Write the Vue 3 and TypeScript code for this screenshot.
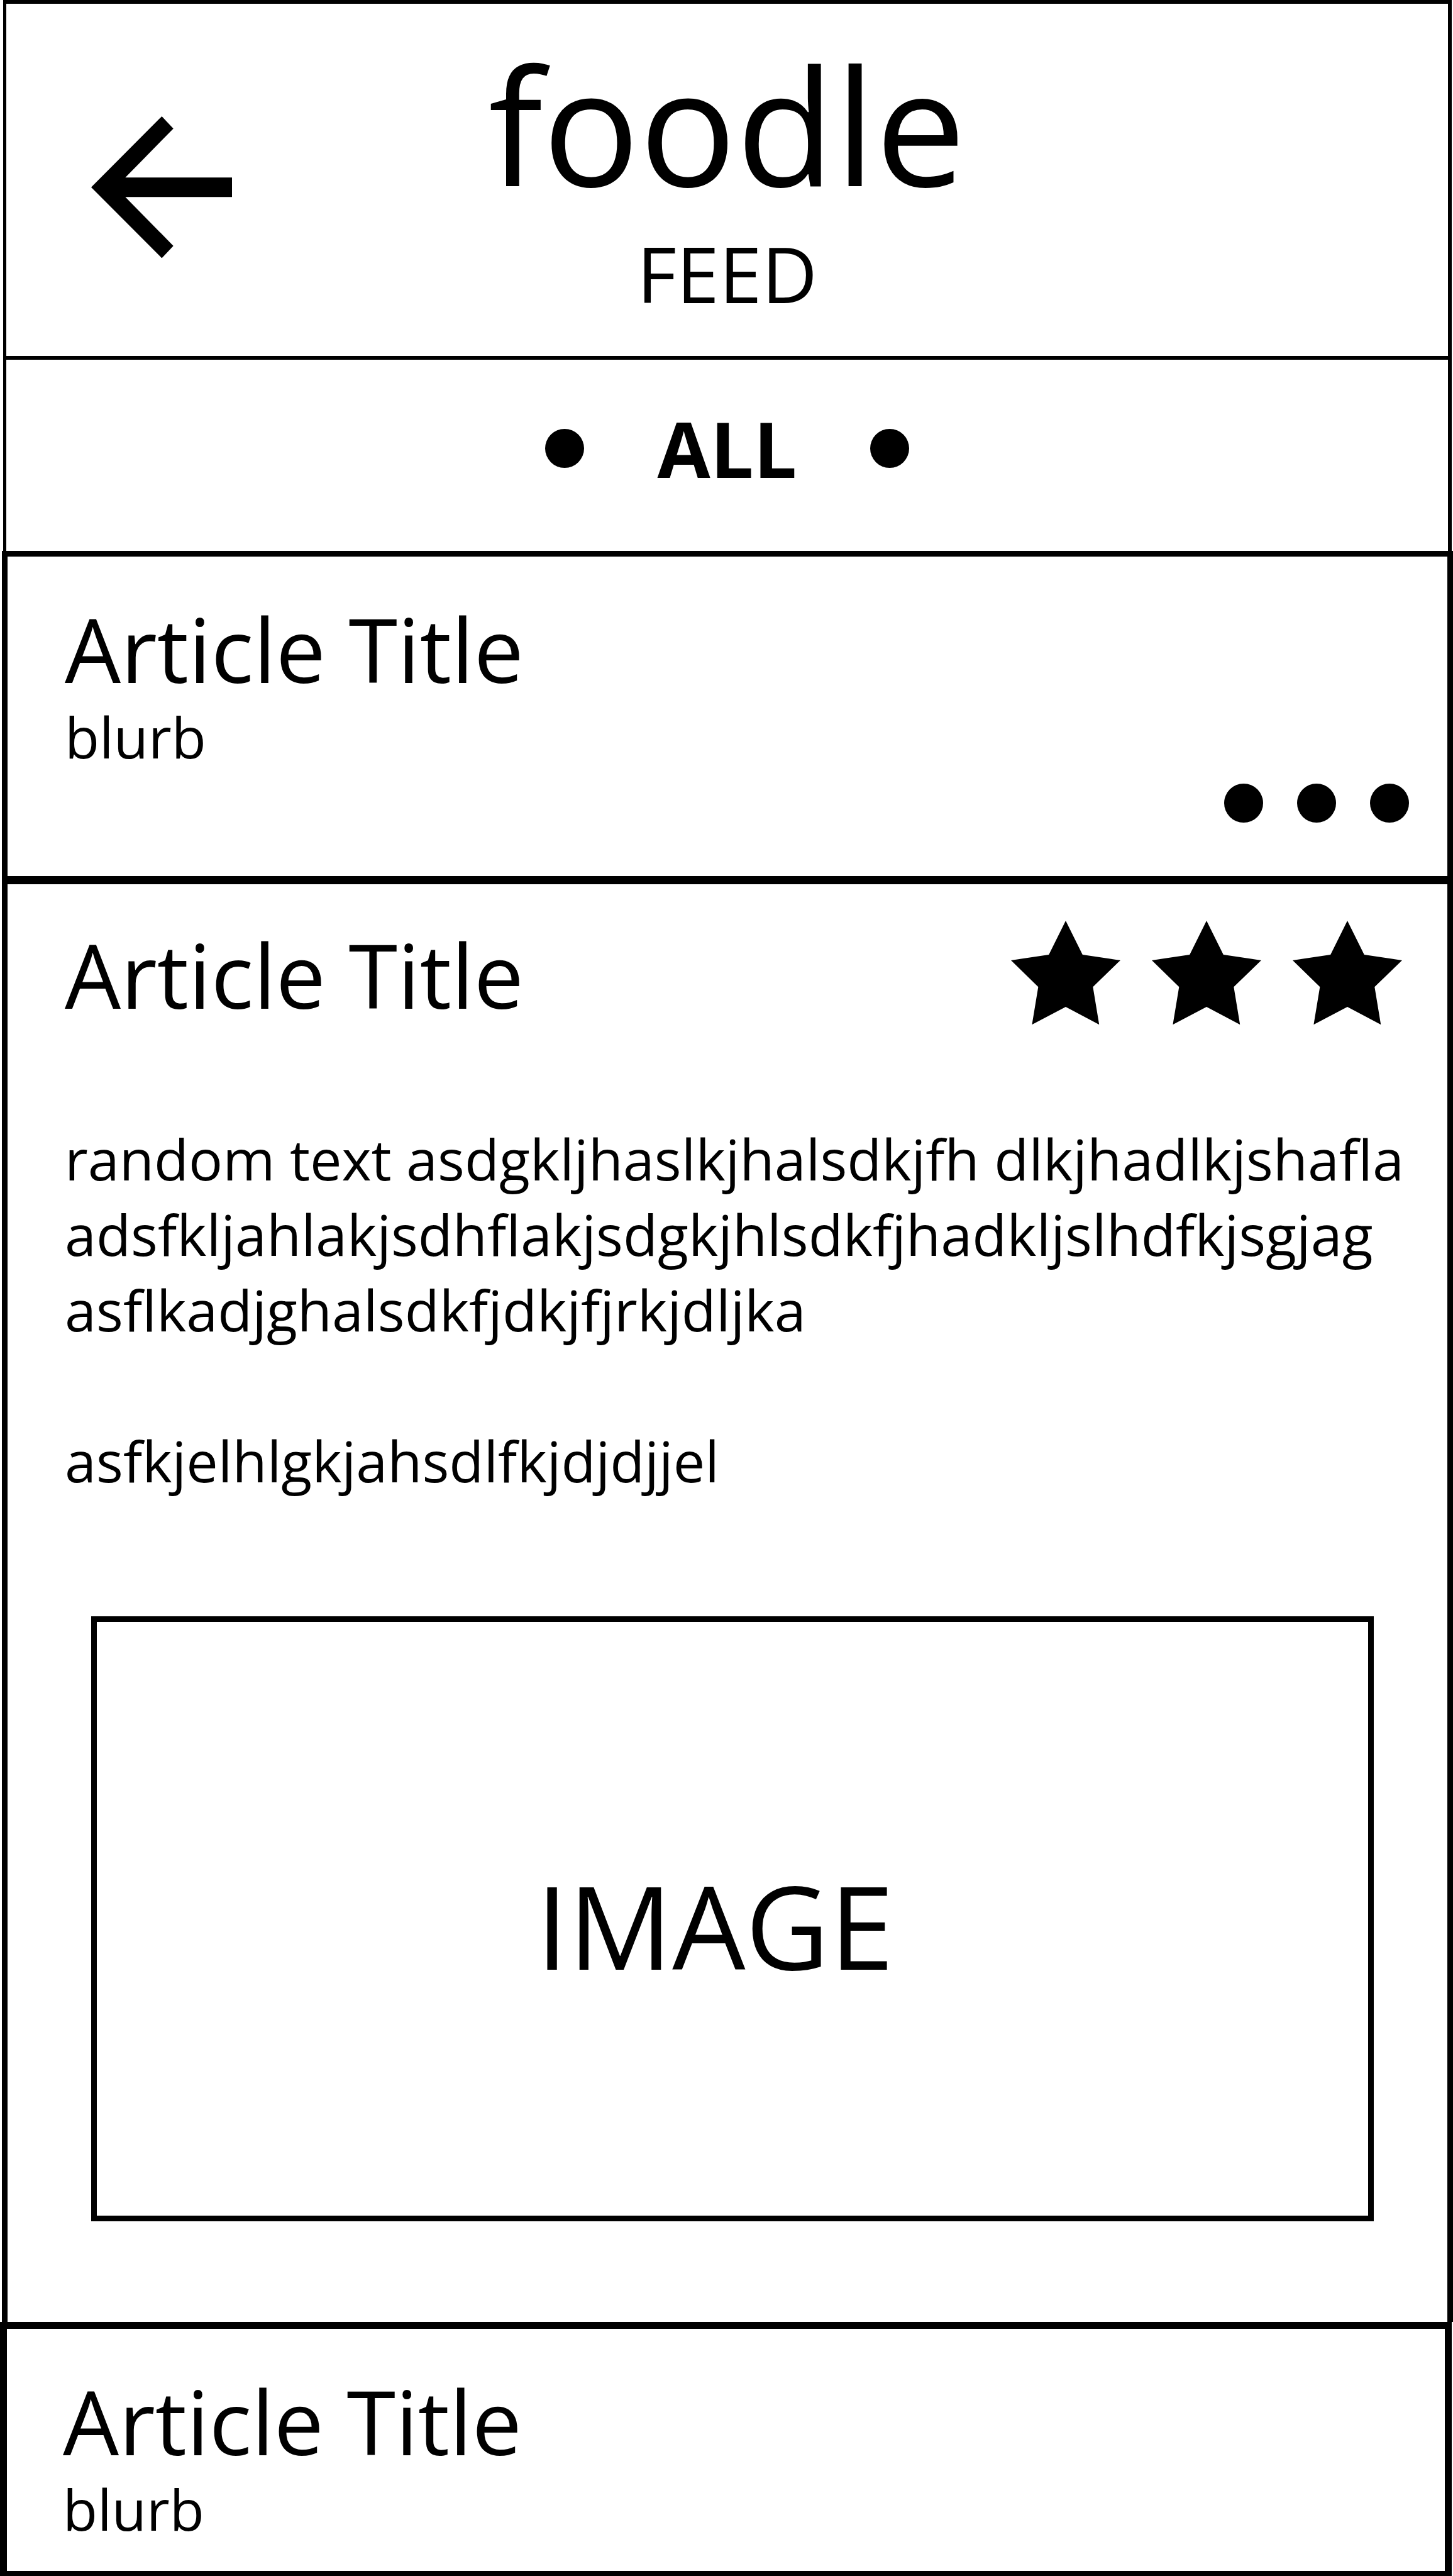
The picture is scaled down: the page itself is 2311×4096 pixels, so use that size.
<script setup lang="ts">
interface Story {
  title: string
  blurb: string
}

const first: Story = { title: 'Article Title', blurb: 'blurb' }
const last: Story = { title: 'Article Title', blurb: 'blurb' }

const paragraphs: string[] = [
  'random text asdgkljhaslkjhalsdkjfh dlkjhadlkjshafla adsfkljahlakjsdhflakjsdgkjhlsdkfjhadkljslhdfkjsgjag asflkadjghalsdkfjdkjfjrkjdljka',
  'asfkjelhlgkjahsdlfkjdjdjjel',
]

const rating = 3
</script>

<template>
  <div class="feed">
    <header class="top">
      <button class="back" type="button" aria-label="Back">
        <svg viewBox="0 0 305 307" aria-hidden="true">
          <path d="M0 153.500 153 0 178 26.500 74 132.500H305V174.500H74L178 280.500 153 307Z" />
        </svg>
      </button>
      <div class="brand">
        <h1 class="name">foodle</h1>
        <p class="section">FEED</p>
      </div>
    </header>

    <nav class="filter" aria-label="Filter">
      <button class="dot" type="button" aria-label="Previous filter"></button>
      <span class="current">ALL</span>
      <button class="dot" type="button" aria-label="Next filter"></button>
    </nav>

    <main>
      <article class="card">
        <h2 class="title">{{ first.title }}</h2>
        <p class="blurb">{{ first.blurb }}</p>
        <button class="more" type="button" aria-label="More">
          <span v-for="n in 3" :key="n" class="dot"></span>
        </button>
      </article>

      <article class="card open">
        <div class="heading">
          <h2 class="title">{{ first.title }}</h2>
          <div class="stars" role="img" :aria-label="`${rating} stars`">
            <svg v-for="n in rating" :key="n" class="star" viewBox="0 0 237 225" aria-hidden="true">
              <path d="M118.500 0 155 73.700 237 85.700 177.500 143.300 191 225 118.500 186.600 45.500 225 59 143.300 0 85.700 82 73.700Z" />
            </svg>
          </div>
        </div>
        <div class="body">
          <p v-for="text in paragraphs" :key="text">{{ text }}</p>
        </div>
        <div class="image">IMAGE</div>
      </article>

      <article class="card last">
        <h2 class="title">{{ last.title }}</h2>
        <p class="blurb">{{ last.blurb }}</p>
      </article>
    </main>
  </div>
</template>

<style>
body {
  background: #fff;
}
</style>

<style scoped>
.feed,
.feed * {
  box-sizing: border-box;
  margin: 0;
}

.feed {
  overflow: hidden;
  background: #fff;
  color: #000;
  font-family: "Open Sans", "Noto Sans", sans-serif;
}

button {
  padding: 0;
  border: 0;
  background: none;
  color: inherit;
  font: inherit;
  cursor: pointer;
}

svg {
  display: block;
  width: 100%;
  fill: currentColor;
}

.top {
  display: grid;
  grid-template-columns: 1fr auto 1fr;
  align-items: start;
  margin: 0 2px 0 5px;
  padding: 41px 0 43px;
  border: solid #000;
  border-width: 6px 6px 6px 5px;
}

.back {
  width: 224px;
  margin: 138px 0 0 135px;
}

.brand {
  text-align: center;
}

.name {
  font-size: 256px;
  font-weight: 400;
  line-height: 300px;
}

.section {
  font-size: 122px;
  line-height: 176px;
}

.filter {
  display: flex;
  justify-content: center;
  align-items: center;
  gap: 116px;
  margin: 0 2px 0 5px;
  padding: 53px 0 75px;
  border: solid #000;
  border-width: 0 6px 0 5px;
}

.current {
  font-size: 122px;
  font-weight: 700;
  line-height: 176px;
}

.dot {
  width: 62px;
  height: 62px;
  border-radius: 50%;
  background: #000;
}

.card {
  margin-left: 3px;
  padding: 61px 61px 85px 91px;
  border: solid #000;
  border-width: 9px 9px 0;
}

.title {
  font-size: 141px;
  font-weight: 400;
  line-height: 170px;
}

.blurb {
  font-size: 90px;
  line-height: 110px;
}

.more {
  display: flex;
  gap: 54px;
  margin: 20px 0 0 auto;
}

.open {
  padding-top: 58px;
  padding-right: 40px;
  padding-bottom: 160px;
  border-top-width: 13px;
}

.heading {
  display: flex;
  justify-content: space-between;
  align-items: flex-start;
  padding-right: 32px;
}

.stars {
  display: flex;
  gap: 50px;
}

.star {
  width: 174px;
}

.body {
  display: flex;
  flex-direction: column;
  gap: 120px;
  margin-top: 148px;
  font-size: 90px;
  line-height: 120px;
}

.image {
  display: flex;
  justify-content: center;
  align-items: center;
  min-height: 962px;
  margin: 188px 77px 0 42px;
  padding: 20px 56px 0 0;
  border: 9px solid #000;
  font-size: 184px;
  line-height: 240px;
}

.last {
  margin: 0 2px 0 0;
  padding-bottom: 44px;
  padding-left: 89px;
  border-width: 11px 11px 9px;
}
</style>
